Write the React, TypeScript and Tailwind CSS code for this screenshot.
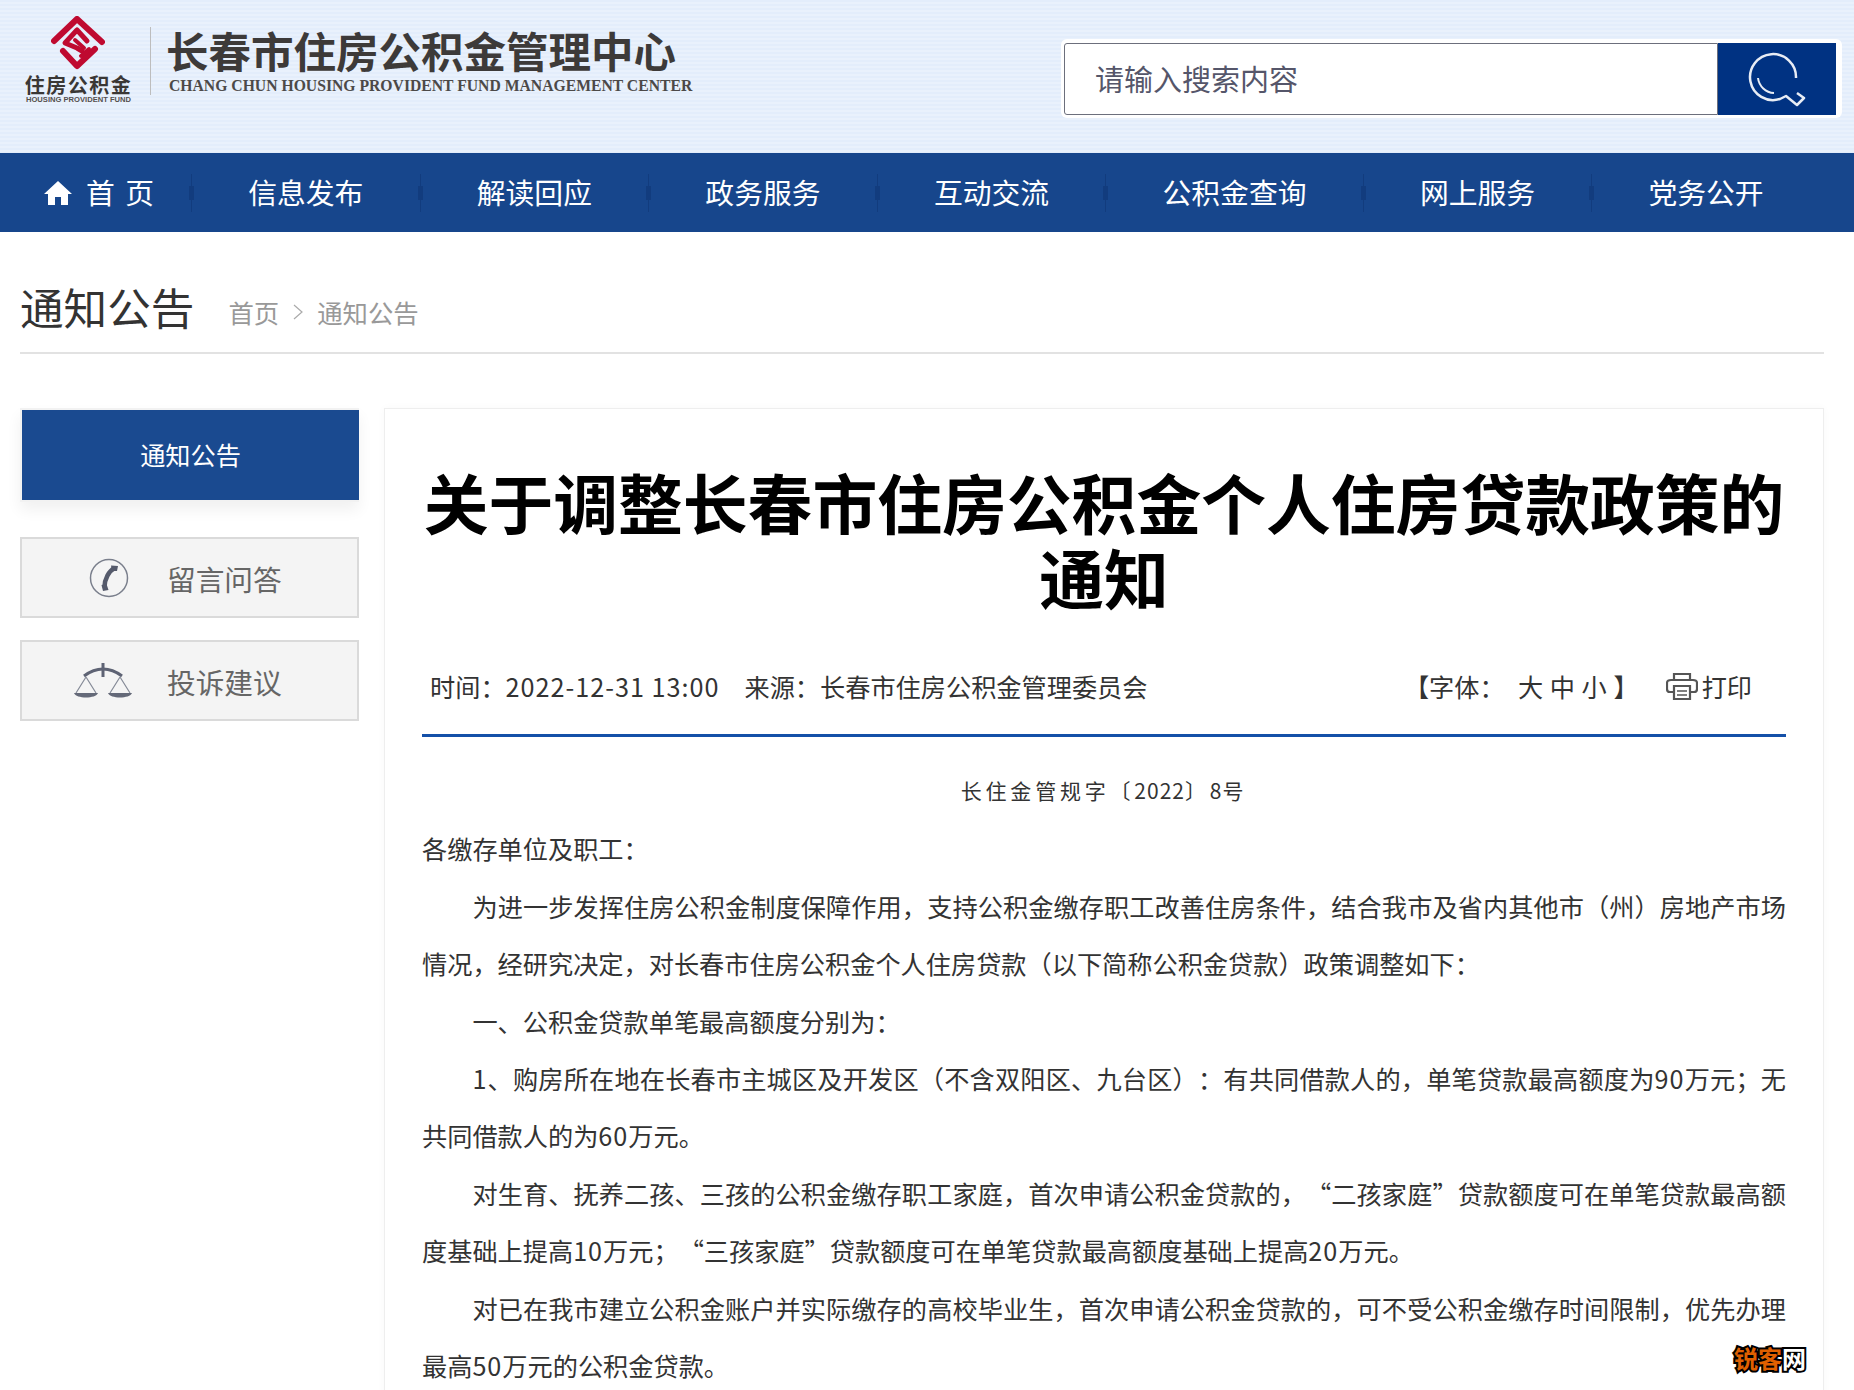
import type { ReactNode } from "react";

const cjk = "font-['Noto_Sans_CJK_SC','Noto_Sans',sans-serif]";

const navItems = ["信息发布", "解读回应", "政务服务", "互动交流", "公积金查询", "网上服务", "党务公开"];

function Num({ children }: { children: ReactNode }) {
  return <span className="tracking-[1px]">{children}</span>;
}

function Logo() {
  return (
    <div className="flex items-start pl-[25px] pt-[16px]">
      <div className="flex w-[107px] flex-col items-center">
        <svg viewBox="0 0 54 54" className="ml-[-1px] h-[54px] w-[54px]" fill="none" stroke="#bf0a30" strokeWidth="6" strokeLinecap="round" strokeLinejoin="round">
          <path d="M3 25 26 3 51 26" />
          <path d="M36 25 26 14 14 27 26 32 31 35" strokeWidth="5" />
          <path d="M24 24 33 32" strokeWidth="4" />
          <path d="M12 35 26 50 44 33" strokeWidth="6" />
          <path d="M30 40 38 33" strokeWidth="4" />
        </svg>
        <div className="mt-[4px] text-[20px] leading-[22px] font-bold tracking-[1.5px] whitespace-nowrap text-[#3a3735]">住房公积金</div>
        <div className="font-['Liberation_Sans',sans-serif] text-[7.6px] leading-[7px] font-bold whitespace-nowrap text-[#55504e]">HOUSING PROVIDENT FUND</div>
      </div>
      <div className="mt-[11px] ml-[18px] h-[68px] w-px bg-[#bdbdbd]" />
      <div className="ml-[15px] pt-[12px]">
        <div className="text-[42.5px] leading-[44px] font-bold whitespace-nowrap text-[#3d3a39]">长春市住房公积金管理中心</div>
        <div className="mt-[7px] pl-[3px] font-['Liberation_Serif',serif] text-[15.7px] leading-[14px] font-bold whitespace-nowrap text-[#4c4948]">CHANG CHUN HOUSING PROVIDENT FUND MANAGEMENT CENTER</div>
      </div>
    </div>
  );
}

function SearchBox() {
  return (
    <div className="mt-[39px] mr-[12px] flex h-[79px] w-[781px] items-center rounded-[6px] bg-white pr-[6px] pl-[3px]">
      <div className="flex h-[72px] flex-1 items-center rounded-l-[3px] border border-[#6c6f7c] pl-[30px] text-[29px] text-[#55566a]">请输入搜索内容</div>
      <div className="flex h-[72px] w-[118px] items-center justify-center bg-[#003282]">
        <svg viewBox="0 0 80 60" className="h-[60px] w-[80px]" fill="none" stroke="#e8edf5" strokeLinejoin="round">
          <path d="M59 29A23 23 0 1 0 43 50L49 47 60 56 67 49 60 44" strokeWidth="2.5" />
          <path d="M21 29A17 17 0 0 0 37 44" strokeWidth="2" />
        </svg>
      </div>
    </div>
  );
}

function NavSep() {
  return (
    <div className="h-[38px] w-[5px] shrink-0 bg-[linear-gradient(#123c7e,#123c7e),linear-gradient(#123c7e,#123c7e)] bg-size-[5px_14px,1px_38px] bg-center bg-no-repeat" />
  );
}

function PhoneIcon() {
  return (
    <svg viewBox="0 0 40 40" className="h-[40px] w-[40px]" fill="none">
      <circle cx="20" cy="20" r="18.5" stroke="#7a7f8c" strokeWidth="1.5" />
      <path d="M25.5 10C20 13 15.5 21 15.5 29" stroke="#555a6b" strokeWidth="4.5" />
      <path d="M22 7.5 29 8 28 13 23 13ZM12.5 27 17.5 26 19.5 32 14 33Z" fill="#555a6b" />
    </svg>
  );
}

function ScaleIcon() {
  return (
    <svg viewBox="0 0 58 36" className="h-[36px] w-[58px]">
      <path d="M10 13C18 7 24 6 29 6 34 6 40 7 48 13" fill="none" stroke="#5e6374" strokeWidth="3" />
      <path d="M29 0V14" stroke="#5e6374" strokeWidth="3" />
      <path d="M12 14 2 30M12 14 22 30M46 14 36 30M46 14 56 30" fill="none" stroke="#858a97" strokeWidth="1.2" />
      <path d="M0 30H24C22 36 2 36 0 30ZM34 30H58C56 36 36 36 34 30Z" fill="#646978" />
    </svg>
  );
}

function PrinterIcon() {
  return (
    <svg viewBox="0 0 32 28" className="h-[28px] w-[32px]" fill="none" stroke="#555" strokeWidth="2.2">
      <path d="M8 8V2H24V8" />
      <path d="M8 20H4C2 20 1 19 1 17V11C1 9 3 8 5 8H27C29 8 31 9 31 11V17C31 19 30 20 28 20H24" />
      <path d="M8 14H24V27H8Z" />
      <path d="M11 19H21M11 23H21" strokeWidth="1.6" />
    </svg>
  );
}

export default function App() {
  return (
    <div className={`relative h-[1390px] w-[1854px] overflow-hidden bg-white ${cjk}`}>
      <div className="flex h-[153px] justify-between bg-[#e6effb] bg-[repeating-linear-gradient(to_bottom,#e3edfb_0px,#e3edfb_2px,#e9f1fc_2px,#e9f1fc_4px)]">
        <Logo />
        <SearchBox />
      </div>

      <div className="flex h-[79px] items-center bg-[#17468c] text-[28.8px] text-white">
        <div className="flex w-[189px] items-center pl-[44px]">
          <svg viewBox="0 0 28 24" className="h-[24px] w-[28px]" fill="white">
            <path d="M14 0 28 13H24V24H17V16H11V24H4V13H0Z" />
          </svg>
          <span className="ml-[14px] pb-[2px] tracking-[2px] whitespace-pre">首 页</span>
        </div>
        <NavSep />
        {navItems.map((item, i) => (
          <div key={item} className="flex items-center">
            <div className="px-[54.2px] pb-[2px] whitespace-nowrap">{item}</div>
            {i < navItems.length - 1 && <NavSep />}
          </div>
        ))}
      </div>

      <div className="mx-[20px] flex h-[122px] w-[1804px] items-end border-b-2 border-[#e2e2e2] pb-[15px]">
        <div className="text-[43.6px] leading-[62px] text-[#333]">通知公告</div>
        <div className="mb-[6px] ml-[34px] flex items-center text-[25.4px] text-[#999]">
          <span>首页</span>
          <svg viewBox="0 0 10 16" className="mx-[14px] h-[16px] w-[10px]" fill="none" stroke="#aaa" strokeWidth="1.2">
            <path d="M1 1 9 8 1 15" />
          </svg>
          <span>通知公告</span>
        </div>
      </div>

      <div className="mt-[54px] mr-[30px] ml-[20px] flex items-start">
        <div className="w-[339px] shrink-0">
          <div className="flex h-[94px] items-center justify-center border-y-2 border-l-2 border-[#f2f2f2] bg-[#1a4a90] bg-clip-padding text-[25.2px] text-white shadow-[0_8px_14px_rgba(0,0,0,0.06)]">通知公告</div>
          <div className="mt-[35px] flex h-[81px] items-center border-2 border-[#dadada] bg-[#f4f4f4] text-[28.7px] text-[#666]">
            <div className="flex w-[145px] justify-center pl-[28px]"><PhoneIcon /></div>
            <span className="pt-[2px]">留言问答</span>
          </div>
          <div className="mt-[22px] flex h-[81px] items-center border-2 border-[#dadada] bg-[#f4f4f4] text-[28.7px] text-[#666]">
            <div className="flex w-[145px] justify-center pl-[17px]"><ScaleIcon /></div>
            <span className="pt-[2px]">投诉建议</span>
          </div>
        </div>

        <div className="ml-[25px] flex-1 border border-[#eee] px-[37px] pt-[55px] pb-[40px] shadow-[0_0_8px_rgba(0,0,0,0.03)]">
          <h1 className="text-center text-[64.8px] leading-[75px] font-bold text-black">关于调整长春市住房公积金个人住房贷款政策的通知</h1>
          <div className="mt-[54px] flex items-center justify-between border-b-[3px] border-[#1450a8] pr-[34px] pb-[30px] pl-[8px] text-[25.2px] leading-[36px] text-[#333]">
            <div className="whitespace-pre">
              <span>时间：</span>
              <Num>2022-12-31 13:00</Num>
              <span className="ml-[25px]">来源：长春市住房公积金管理委员会</span>
            </div>
            <div className="flex items-center">
              <span className="whitespace-pre [word-spacing:1px]">【字体：  大 中 小 】</span>
              <span className="mr-[4px] ml-[27px]"><PrinterIcon /></span>
              <span>打印</span>
            </div>
          </div>

          <div className="text-justify text-[25.2px] leading-[57.4px] text-[#333] [text-spacing-trim:space-all]">
            <p className="mt-[25px] mb-[1px] text-center text-[21px] tracking-[3.8px]">
              长住金管规字〔<span className="tracking-[1px]">2022</span>〕<span className="tracking-[1px]">8</span>号
            </p>
            <p>各缴存单位及职工：</p>
            <p className="indent-[2em]">为进一步发挥住房公积金制度保障作用，支持公积金缴存职工改善住房条件，结合我市及省内其他市（州）房地产市场情况，经研究决定，对长春市住房公积金个人住房贷款（以下简称公积金贷款）政策调整如下：</p>
            <p className="indent-[2em]">一、公积金贷款单笔最高额度分别为：</p>
            <p className="indent-[2em]"><Num>1</Num>、购房所在地在长春市主城区及开发区（不含双阳区、九台区）：有共同借款人的，单笔贷款最高额度为<Num>90</Num>万元；无共同借款人的为<Num>60</Num>万元。</p>
            <p className="indent-[2em]">对生育、抚养二孩、三孩的公积金缴存职工家庭，首次申请公积金贷款的，“二孩家庭”贷款额度可在单笔贷款最高额度基础上提高<Num>10</Num>万元；“三孩家庭”贷款额度可在单笔贷款最高额度基础上提高<Num>20</Num>万元。</p>
            <p className="indent-[2em]">对已在我市建立公积金账户并实际缴存的高校毕业生，首次申请公积金贷款的，可不受公积金缴存时间限制，优先办理最高<Num>50</Num>万元的公积金贷款。</p>
          </div>
        </div>
      </div>

      <div className="absolute top-[1344px] left-[1734px] text-[24px] leading-[28px] font-bold whitespace-nowrap [-webkit-text-stroke:4px_black] [paint-order:stroke_fill]">
        <span className="text-[#e06000]">锐客</span>
        <span className="text-white">网</span>
      </div>
    </div>
  );
}
